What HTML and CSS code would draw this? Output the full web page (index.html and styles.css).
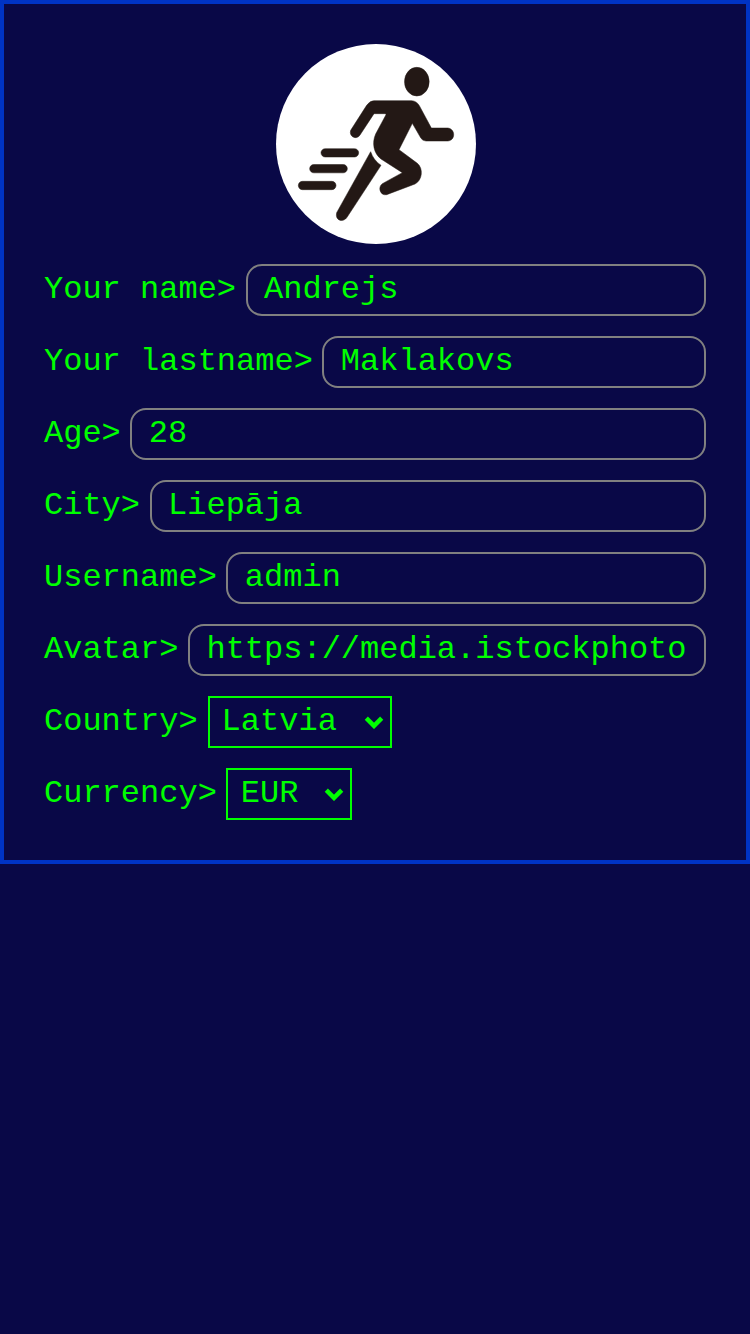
FILE: index.html
```html
<!DOCTYPE html>
<html lang="en">
<head>
<meta charset="utf-8">
<title>Profile</title>
<link rel="stylesheet" href="styles.css">
</head>
<body>
<main class="profile">
  <svg class="avatar" viewBox="18 12 600 600" role="img" aria-label="Avatar">
    <circle cx="318" cy="312" r="300" fill="#fff"/>
    <g fill="#231815" stroke="#231815" stroke-width="1.500">
      <ellipse cx="440.500" cy="125" rx="37" ry="43"/>
      <rect x="153" y="326" width="113" height="25" rx="12.500"/>
      <rect x="119" y="373.500" width="113" height="25" rx="12.500"/>
      <rect x="85" y="424" width="113" height="25" rx="12.500"/>
      <path d="M312 182H425Q440 183 448 197L484 264H533C557 266 557 302 533 303H468Q458 303 453 295L427 250L387 329L442 370C461 386 457 421 435 432L350 464C331 468 322 442 337 431L397 398L333 357C311 340 305 309 317 282L348 224Q349 221 345 221H312L270 285C260 301 236 291 242 271L290 196Q299 182 312 182Z"/>
      <path d="M302 335Q310 360 333 376L231 532C220 549 194 542 200 518Z"/>
    </g>
  </svg>
  <label class="row"><span>Your name&gt;</span><input class="field" value="Andrejs"></label>
  <label class="row"><span>Your lastname&gt;</span><input class="field field-snap" value="Maklakovs"></label>
  <label class="row"><span>Age&gt;</span><input class="field field-snap" value="28"></label>
  <label class="row"><span>City&gt;</span><input class="field" value="Liepāja"></label>
  <label class="row"><span>Username&gt;</span><input class="field field-snap" value="admin"></label>
  <label class="row"><span>Avatar&gt;</span><input class="field" value="https://media.istockphoto"></label>
  <div class="row"><span>Country&gt;</span>
    <div class="select country"><span>Latvia</span><svg class="chevron" viewBox="0 0 20 14"><path d="M2.300 3.200L10 10.900L17.700 3.200"/></svg></div>
  </div>
  <div class="row"><span>Currency&gt;</span>
    <div class="select currency"><span>EUR</span><svg class="chevron" viewBox="0 0 20 14"><path d="M2.300 3.200L10 10.900L17.700 3.200"/></svg></div>
  </div>
</main>
</body>
</html>
```
FILE: styles.css
```css
* { box-sizing: border-box; }
body {
  margin: 0;
  min-height: 100vh;
  background: #090847;
  color: #0f0;
  font: 32px/36px "Liberation Mono", monospace;
}
.profile {
  display: flex;
  flex-direction: column;
  gap: 20px;
  padding: 40px;
  border: 4px solid #0033c4;
}
.avatar {
  width: 200px;
  height: 200px;
  align-self: center;
  margin-left: 2px;
}
.row {
  display: flex;
  align-items: center;
  gap: 10px;
  height: 52px;
  white-space: nowrap;
}
.field {
  flex: 1;
  min-width: 0;
  height: 52px;
  padding: 0 16px 2px;
  border: 2px solid #808080;
  border-radius: 16px;
  background: transparent;
  color: inherit;
  font: inherit;
  outline: none;
}
/* Keep the box on a whole pixel while the text stays on the character grid. */
.field-snap {
  margin-left: -0.8px;
  padding-left: 16.8px;
}
.select {
  display: flex;
  align-items: center;
  justify-content: space-between;
  height: 52px;
  padding: 0 6px 0 12px;
  border: 2px solid #0f0;
}
.country { width: 184px; margin-left: 0.4px; padding-left: 11.6px; }
.currency { width: 126px; margin-left: -0.8px; padding-left: 12.8px; }
.chevron {
  width: 20px;
  height: 14px;
  fill: none;
  stroke: #0f0;
  stroke-width: 4.5;
}
```
